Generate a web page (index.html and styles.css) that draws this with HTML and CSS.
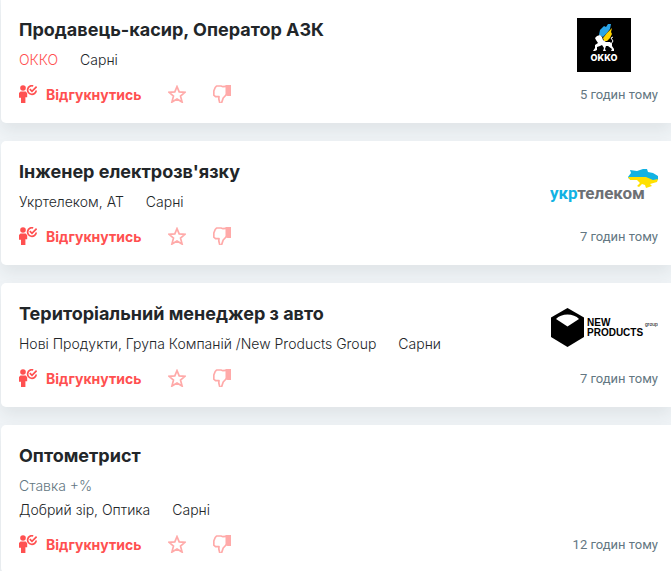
FILE: index.html
```html
<!DOCTYPE html>
<html lang="uk">
  <head>
    <meta charset="utf-8" />
    <meta name="viewport" content="width=device-width, initial-scale=1" />
    <title>Вакансії в Сарнах</title>
    <link rel="stylesheet" href="styles.css" />
  </head>
  <body>
    <!-- Shared action icons -->
    <svg class="sprite" aria-hidden="true">
      <symbol id="icon-apply" viewBox="0 0 18 18">
        <circle cx="4" cy="3" r="2.800" />
        <path d="M1.500 6.500h5.200l1.500 1.700v4H6.400V18H2v-5.200H0V8z" />
        <path d="M14.200.9A4.300 4.300 0 1 0 17.200 5.500M10.800 4.100l2.200 2.200L17.600 1.700" fill="none" stroke="currentColor" stroke-width="1.700" />
      </symbol>
      <symbol id="icon-star" viewBox="0 0 18 18">
        <path d="M9 1.600l2.200 5.300 5.800.4-4.500 3.700 1.600 6.100L9 14l-5.100 3.100L5.500 11 1 7.300l5.800-.4z" fill="none" stroke="currentColor" stroke-width="1.700" />
      </symbol>
      <symbol id="icon-dislike" viewBox="0 0 18 18">
        <path d="M13 1.400l-3 .3L8 1H3.600L2.200 2.500.8 6v4.200l1.700 1.400H6l-.2 2.400 1 4h1.700l1.700-5 3.300-3.500" fill="none" stroke="currentColor" stroke-width="1.700" stroke-linejoin="round" />
        <path d="M12.500 0H18v11h-3.500l-2-1z" />
      </symbol>
    </svg>

    <main class="vacancies">
      <article class="card">
        <div class="card-main">
          <h2 class="title"><a href="#">Продавець-касир, Оператор АЗК</a></h2>
          <p class="meta"><a class="company hot" href="#">ОККО</a><span>Сарні</span></p>
          <div class="actions">
            <button class="apply" type="button"><svg class="icon"><use href="#icon-apply" /></svg>Відгукнутись</button>
            <button class="mark" type="button" aria-label="Зберегти"><svg class="icon"><use href="#icon-star" /></svg></button>
            <button class="mark" type="button" aria-label="Не цікаво"><svg class="icon"><use href="#icon-dislike" /></svg></button>
          </div>
        </div>
        <div class="card-side">
          <svg class="logo" viewBox="0 0 108 54" role="img" aria-label="ОККО">
            <path d="M27 0h54v54H27z" fill="#000" />
            <path d="M49 17L50 12L54 8L56 9L58 6L61 6L60 11L57 15L53 19z" fill="#2aa5e8" />
            <path d="M53 20L57 15L62 10L61 14L62 16L60 20L57 23H54z" fill="#ffd400" />
            <path d="M45 20L47 18L50 17L52 19L53 22L56 24L60 24L62 26L62 28L64 31L64 33H61L62 31L58 28L56 28L55 31L56 33H53L54 30L52 27L50 28L47 29L47 32L45 33H43L45 30L45 27L48 25L46 22z" fill="#fff" />
            <path d="M61 26L63 23L61 20L63 19" fill="none" stroke="#fff" />
            <text class="logo-okko" x="54" y="43" text-anchor="middle">OKKO</text>
          </svg>
          <time class="date">5 годин тому</time>
        </div>
      </article>

      <article class="card">
        <div class="card-main">
          <h2 class="title"><a href="#">Інженер електрозв'язку</a></h2>
          <p class="meta"><a class="company" href="#">Укртелеком, АТ</a><span>Сарні</span></p>
          <div class="actions">
            <button class="apply" type="button"><svg class="icon"><use href="#icon-apply" /></svg>Відгукнутись</button>
            <button class="mark" type="button" aria-label="Зберегти"><svg class="icon"><use href="#icon-star" /></svg></button>
            <button class="mark" type="button" aria-label="Не цікаво"><svg class="icon"><use href="#icon-dislike" /></svg></button>
          </div>
        </div>
        <div class="card-side">
          <svg class="logo" viewBox="0 0 108 54" role="img" aria-label="Укртелеком">
            <path d="M78 17L81 13L80 10L87 11L93 9L97 9L98 12L103 13L108 16V20L103 21L96 18L87 17L79 19z" fill="#12b2e3" />
            <path d="M78 17L87 17L96 17L103 20L108 19L107 22L100 24L102 26L96 28L95 25L92 24L89 27L87 26L90 23L87 20L80 20z" fill="#ffe000" />
            <text class="logo-ukr" x="0" y="39"><tspan fill="#12b2e3">укр</tspan><tspan fill="#6d7074">телеком</tspan></text>
          </svg>
          <time class="date">7 годин тому</time>
        </div>
      </article>

      <article class="card">
        <div class="card-main">
          <h2 class="title"><a href="#">Територіальний менеджер з авто</a></h2>
          <p class="meta"><a class="company" href="#">Нові Продукти, Група Компаній /New Products Group</a><span>Сарни</span></p>
          <div class="actions">
            <button class="apply" type="button"><svg class="icon"><use href="#icon-apply" /></svg>Відгукнутись</button>
            <button class="mark" type="button" aria-label="Зберегти"><svg class="icon"><use href="#icon-star" /></svg></button>
            <button class="mark" type="button" aria-label="Не цікаво"><svg class="icon"><use href="#icon-dislike" /></svg></button>
          </div>
        </div>
        <div class="card-side">
          <svg class="logo" viewBox="0 0 108 54" role="img" aria-label="New Products Group">
            <path d="M17.500 6L34 15.500V35L17.500 45 1 35V15.500z" fill="#000" />
            <path d="M6 17c5-6 18-6 23 0l-11.500 7.500z" fill="#fff" />
            <text class="logo-np" x="37" y="24">NEW</text>
            <text class="logo-np" x="37" y="34">PRODUCTS</text>
            <text class="logo-np-small" x="95" y="24">group</text>
          </svg>
          <time class="date">7 годин тому</time>
        </div>
      </article>

      <article class="card">
        <div class="card-main">
          <h2 class="title"><a href="#">Оптометрист</a></h2>
          <p class="salary">Ставка +%</p>
          <p class="meta"><a class="company" href="#">Добрий зір, Оптика</a><span>Сарні</span></p>
          <div class="actions">
            <button class="apply" type="button"><svg class="icon"><use href="#icon-apply" /></svg>Відгукнутись</button>
            <button class="mark" type="button" aria-label="Зберегти"><svg class="icon"><use href="#icon-star" /></svg></button>
            <button class="mark" type="button" aria-label="Не цікаво"><svg class="icon"><use href="#icon-dislike" /></svg></button>
          </div>
        </div>
        <div class="card-side">
          <time class="date">12 годин тому</time>
        </div>
      </article>
    </main>
  </body>
</html>
```
FILE: styles.css
```css
body {
  margin: 0;
  background-color: #f0f4f7;
  color: #222629;
  font-family: Inter, Roboto, sans-serif;
}

.sprite {
  display: none;
}

.vacancies {
  display: flex;
  flex-direction: column;
  gap: 18px;
  margin-top: -1px;
  padding-left: 1px;
}

.card {
  display: flex;
  justify-content: space-between;
  padding: 19px 13px 16px 18px;
  background-color: #fff;
  border-radius: 5px 0 0 5px;
  box-shadow: 0 8px 16px rgba(40, 45, 55, 0.08);
}

.vacancies .card:first-child {
  border-top-left-radius: 0;
}

.title {
  margin: 0 0 6px;
  font-size: 18px;
  line-height: 24px;
  font-weight: 700;
}

.title a,
.company {
  color: inherit;
  text-decoration: none;
}

.meta,
.salary {
  margin: 0;
  font-size: 14px;
  line-height: 24px;
  font-weight: 300;
}

.meta {
  display: flex;
  gap: 22px;
}

.salary {
  color: #637782;
}

.company.hot {
  color: #ff5050;
}

.actions {
  display: flex;
  align-items: center;
  gap: 27px;
  margin: 10px 0 1px;
}

.actions button {
  display: flex;
  align-items: center;
  height: 24px;
  padding: 0;
  border: none;
  background: none;
  color: #ff5050;
  font-family: inherit;
  cursor: pointer;
}

.actions .apply {
  gap: 9px;
  font-size: 14px;
  font-weight: 700;
}

.actions .mark {
  color: #ffaaa9;
}

.icon {
  width: 18px;
  height: 18px;
  fill: currentColor;
}

.card-side {
  display: flex;
  flex-direction: column;
  justify-content: space-between;
  align-items: flex-end;
}

.logo {
  width: 108px;
  height: 54px;
}

.date {
  margin-top: auto;
  color: #637782;
  font-family: Roboto, sans-serif;
  font-size: 13px;
  line-height: 24px;
}

.logo-okko {
  fill: #fff;
  font: 800 9px Inter, sans-serif;
}

.logo-ukr {
  font: 700 17px Roboto, sans-serif;
}

.logo-np {
  font: 700 10px "Liberation Sans", sans-serif;
}

.logo-np-small {
  font: 400 5px "Liberation Sans", sans-serif;
}
```
